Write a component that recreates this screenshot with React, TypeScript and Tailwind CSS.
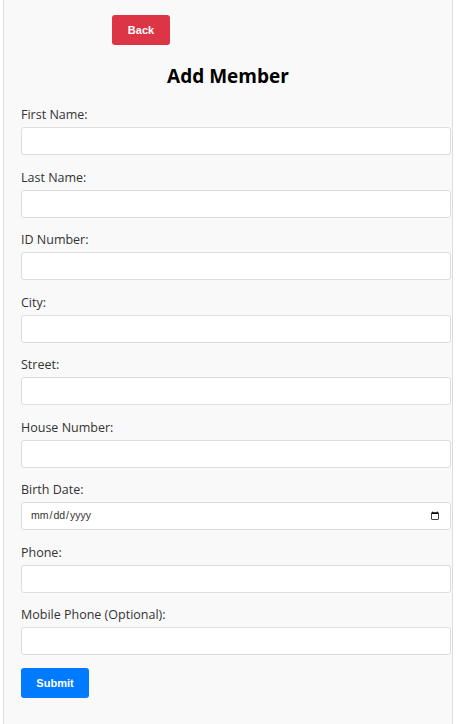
const fields = [
  { label: 'First Name:', type: 'text' },
  { label: 'Last Name:', type: 'text' },
  { label: 'ID Number:', type: 'text' },
  { label: 'City:', type: 'text' },
  { label: 'Street:', type: 'text' },
  { label: 'House Number:', type: 'text' },
  { label: 'Birth Date:', type: 'date' },
  { label: 'Phone:', type: 'text' },
  { label: 'Mobile Phone (Optional):', type: 'text' },
];

const App = () => {
  return (
    <div className="min-h-[724px] bg-white font-['Open_Sans',sans-serif]">
      <div className="ml-[3px] w-[450px] min-h-[724px] bg-[#f9f9f9] border-x border-[#dddddd] pb-8">
        <div className="pt-[15px] pl-[108px]">
          <button className="h-[30px] w-[58px] rounded-[3px] bg-[#dc3545] text-white text-[11px] font-bold font-['Liberation_Sans',sans-serif]">
            Back
          </button>
        </div>
        <h2 className="mt-[18px] text-center text-[19px] leading-[26px] font-bold text-black">Add Member</h2>
        <form className="mt-[17px] pl-[17px]">
          {fields.map((f) => (
            <div key={f.label} className="mb-[13.5px]">
              <label className="block text-[12.5px] leading-[18px] text-[#333] mb-[3px]">{f.label}</label>
              <input
                type={f.type}
                className={
                  f.type === 'date'
                    ? "block h-[28px] w-[430px] rounded-[3px] border border-[#dddddd] bg-white px-2 text-[10.5px] text-[#333] font-['Liberation_Sans_Narrow','Liberation_Sans',sans-serif]"
                    : 'block h-[28px] w-[430px] rounded-[3px] border border-[#dddddd] bg-white px-2 text-[12px] text-[#333]'
                }
              />
            </div>
          ))}
          <button
            type="submit"
            className="-mt-[1.5px] h-[30px] w-[68px] rounded-[3px] bg-[#007bff] text-white text-[11px] font-bold font-['Liberation_Sans',sans-serif]"
          >
            Submit
          </button>
        </form>
      </div>
    </div>
  );
};

export default App;
